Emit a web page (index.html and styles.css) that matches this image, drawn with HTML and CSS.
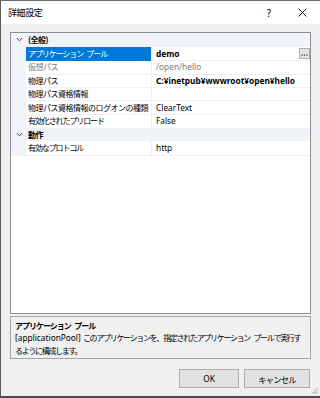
FILE: index.html
```html
<!DOCTYPE html>
<html lang="ja">
<head>
<meta charset="utf-8">
<title>詳細設定</title>
<link rel="stylesheet" href="styles.css">
</head>
<body>
<div class="window">
  <div class="titlebar">
    <span class="title ja">詳細設定</span>
    <span class="help">?</span>
    <svg class="close" width="9" height="9" viewBox="0 0 9 9"><path d="M0.5 0.5L8.5 8.5M8.5 0.5L0.5 8.5" stroke="#000" stroke-width="0.9" fill="none"/></svg>
  </div>
  <div class="content">
    <div class="grid">
      <div class="row cat">
        <span class="gut"><svg width="7" height="5" viewBox="0 0 7 5"><path d="M0.8 1L3.5 3.8L6.2 1" stroke="#444" stroke-width="1" fill="none"/></svg></span>
        <span class="catname ja">(全般)</span>
      </div>
      <div class="row item">
        <span class="gut"></span>
        <span class="name sel ja">アプリケーション<span class="sp"> </span>プール</span>
        <span class="val bold">demo<span class="dots"><svg width="9" height="9" viewBox="0 0 9 9"><g fill="#333"><rect x="1.5" y="5.5" width="1.2" height="1.2"/><rect x="3.9" y="5.5" width="1.2" height="1.2"/><rect x="6.3" y="5.5" width="1.2" height="1.2"/></g></svg></span></span>
      </div>
      <div class="row item">
        <span class="gut"></span>
        <span class="name dis ja k">仮想パス</span>
        <span class="val dis">/open/hello</span>
      </div>
      <div class="row item">
        <span class="gut"></span>
        <span class="name ja k">物理パス</span>
        <span class="val bold">C:¥inetpub¥wwwroot¥open¥hello</span>
      </div>
      <div class="row item">
        <span class="gut"></span>
        <span class="name ja k">物理パス資格情報</span>
        <span class="val"></span>
      </div>
      <div class="row item">
        <span class="gut"></span>
        <span class="name ja k">物理パス資格情報のログオンの種類</span>
        <span class="val">ClearText</span>
      </div>
      <div class="row item">
        <span class="gut"></span>
        <span class="name ja">有効化されたプリロード</span>
        <span class="val">False</span>
      </div>
      <div class="row cat">
        <span class="gut"><svg width="7" height="5" viewBox="0 0 7 5"><path d="M0.8 1L3.5 3.8L6.2 1" stroke="#444" stroke-width="1" fill="none"/></svg></span>
        <span class="catname ja">動作</span>
      </div>
      <div class="row item">
        <span class="gut"></span>
        <span class="name ja">有効なプロトコル</span>
        <span class="val">http</span>
      </div>
    </div>
    <div class="desc">
      <div class="desc-title ja">アプリケーション<span class="sp"> </span>プール</div>
      <div class="desc-text">[applicationPool] <span class="ja">このアプリケーションを、指定されたアプリケーション<span class="sp"> </span>プールで実行す</span><br><span class="ja">るように構成します。</span></div>
    </div>
    <div class="buttons">
      <button class="btn ok">OK</button>
      <button class="btn cancel ja">キャンセル</button>
    </div>
    <svg class="grip" width="7" height="7" viewBox="0 0 7 7"><g fill="#b0b0b0"><rect x="5" y="0" width="1.3" height="1.3"/><rect x="3" y="2" width="1.3" height="1.3"/><rect x="5" y="2" width="1.3" height="1.3"/><rect x="1" y="4" width="1.3" height="1.3"/><rect x="3" y="4" width="1.3" height="1.3"/><rect x="5" y="4" width="1.3" height="1.3"/></g></svg>
  </div>
</div>
</body>
</html>
```
FILE: styles.css
```css
* { box-sizing: border-box; }
html, body { margin: 0; padding: 0; }
body {
  width: 320px;
  height: 398px;
  overflow: hidden;
  background: #2b5a86;
  font-family: "Noto Sans", "Noto Sans CJK JP", sans-serif;
  font-size: 8.3px;
  color: #000;
}
.ja {
  font-family: "Noto Sans CJK JP", sans-serif;
  font-size: 8px;
  letter-spacing: -1.1px;
}
.ja.k { letter-spacing: -0.5px; }
.sp { letter-spacing: 1.5px; }
.window {
  width: 320px;
  height: 397px;
  border-left: 1px solid #5c5c5c;
  border-top: 1px solid #6a6a6a;
  border-bottom: 1px solid #4a4a4a;
  background: #f0f0f0;
  display: flex;
  flex-direction: column;
}
.titlebar {
  height: 23px;
  background: #fff;
  display: flex;
  align-items: center;
  padding-left: 7px;
  flex: none;
}
.title { font-size: 9px; flex: 1; letter-spacing: -0.4px; }
.help {
  font-family: "Noto Sans", sans-serif;
  font-size: 10px;
  margin-right: 27px;
}
.close { margin-right: 13px; }
.content {
  flex: 1;
  position: relative;
  padding: 8px 9px 0 9px;
  display: flex;
  flex-direction: column;
}
.grid {
  height: 282px;
  border: 1px solid #8c8f96;
  background: #fff;
  flex: none;
}
.row {
  display: grid;
  grid-template-columns: 15px 126px 1fr;
  height: 13.5px;
  align-items: center;
}
.row.cat {
  background: #f0f3f8;
  grid-template-columns: 15px 1fr;
}
.gut {
  height: 100%;
  background: #f0f3f8;
  display: flex;
  align-items: center;
  justify-content: center;
  padding-left: 2px;
}
.catname { font-weight: bold; padding-left: 2px; letter-spacing: -0.5px; }
.item .name, .item .val {
  height: 100%;
  line-height: 13.5px;
  border-bottom: 1px solid #f0f0f0;
  white-space: nowrap;
  overflow: hidden;
}
.item .name {
  padding-left: 2px;
  border-right: 1px solid #f0f0f0;
}
.item .val { padding-left: 4px; position: relative; overflow: visible; }
.name.sel { background: #0078d7; color: #fff; border-bottom-color: #0078d7; }
.dis { color: #7a7a7a; }
.bold { font-weight: bold; }
.dots {
  position: absolute;
  right: 0px;
  top: 1px;
  width: 11px;
  height: 11px;
  border: 1px solid #adadad;
  background: #e4e4e4;
  display: flex;
}
.desc {
  margin-top: 2px;
  height: 43px;
  border: 1px solid #a5a5a5;
  background: #f0f0f0;
  padding: 2px 4px 0 4px;
  flex: none;
}
.desc-title { font-weight: bold; line-height: 13px; letter-spacing: -1px; }
.desc-text { line-height: 12.5px; white-space: nowrap; }
.desc-text .ja { letter-spacing: -1.3px; }
.buttons {
  display: flex;
  justify-content: flex-end;
  gap: 5px;
  margin-top: 10px;
  padding-right: 1px;
}
.btn {
  height: 19px;
  border: 1px solid #adadad;
  background: #e1e1e1;
  font-family: "Noto Sans", "Noto Sans CJK JP", sans-serif;
  font-size: 8.3px;
  color: #000;
  padding: 0;
}
.btn.ok { width: 60px; }
.btn.cancel { width: 66px; letter-spacing: -0.8px; }
.grip { position: absolute; right: 2px; bottom: 1px; }
```
